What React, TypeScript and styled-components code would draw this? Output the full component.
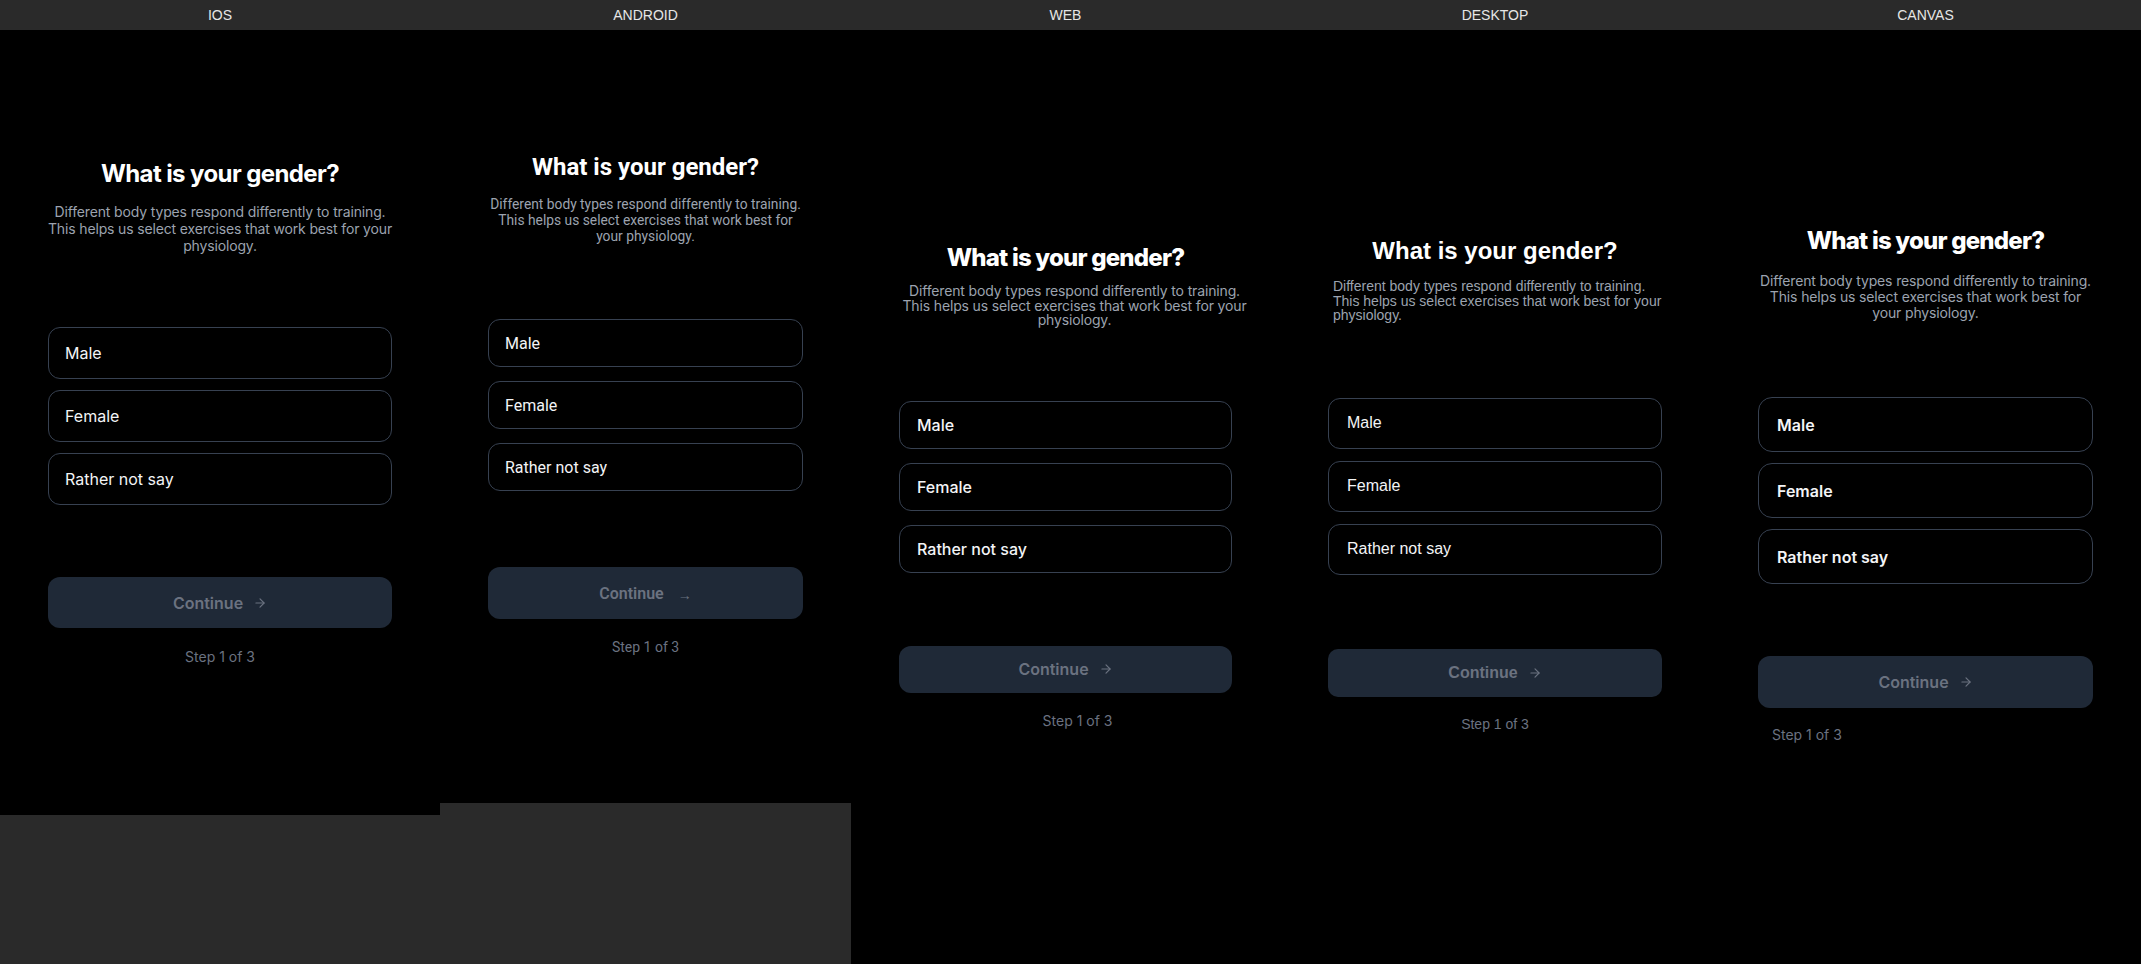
import React from 'react';
import styled, { createGlobalStyle } from 'styled-components';
import { ArrowRight } from 'lucide-react';

type Variant = {
  label: string;
  font: string;
  frameHeight?: number;
  padTop: number;
  titleWeight: number;
  titleTrack: number;
  subSize: number;
  subTrack: number;
  subGap: number;
  subLine: number;
  subAlign: 'center' | 'left';
  subMargin: string;
  subPad: string;
  optTop: number;
  optH: number;
  optGap: number;
  optWeight: number;
  optRadius: number;
  optPad: number;
  btnTop: number;
  btnH: number;
  btnRadius: number;
  stepTop: number;
  stepAlign: 'center' | 'left';
  stepPad: string;
  textArrow?: boolean;
};

const INTER = 'Inter, "Noto Sans", sans-serif';

const variants: Variant[] = [
  {
    label: 'IOS', font: INTER, frameHeight: 785, padTop: 132, titleWeight: 700, titleTrack: -0.6,
    subSize: 14, subTrack: -0.15, subGap: 17, subLine: 17, subAlign: 'center', subMargin: '0 -2px', subPad: '0',
    optTop: 73, optH: 52, optGap: 11, optWeight: 400, optRadius: 12, optPad: 16,
    btnTop: 72, btnH: 51, btnRadius: 12, stepTop: 19, stepAlign: 'center', stepPad: '0',
  },
  {
    label: 'ANDROID', font: 'Roboto, sans-serif', frameHeight: 773, padTop: 125, titleWeight: 700, titleTrack: 0,
    subSize: 13.8, subTrack: 0, subGap: 17, subLine: 16, subAlign: 'center', subMargin: '0 -1px', subPad: '0',
    optTop: 75, optH: 48, optGap: 14, optWeight: 400, optRadius: 12, optPad: 16,
    btnTop: 76, btnH: 52, btnRadius: 12, stepTop: 18, stepAlign: 'center', stepPad: '0',
    textArrow: true,
  },
  {
    label: 'WEB', font: INTER, padTop: 216, titleWeight: 800, titleTrack: -0.8,
    subSize: 14, subTrack: -0.15, subGap: 14, subLine: 14.5, subAlign: 'center', subMargin: '0 -22px 0 -4px', subPad: '0',
    optTop: 73, optH: 48, optGap: 14, optWeight: 500, optRadius: 12, optPad: 17,
    btnTop: 73, btnH: 47, btnRadius: 12, stepTop: 18, stepAlign: 'center', stepPad: '0 0 0 24px',
  },
  {
    label: 'DESKTOP', font: '"Liberation Sans", Arial, sans-serif', padTop: 209, titleWeight: 700, titleTrack: 0,
    subSize: 14, subTrack: 0, subGap: 16, subLine: 14.5, subAlign: 'left', subMargin: '0', subPad: '0 0 0 5px',
    optTop: 75, optH: 51, optGap: 12, optWeight: 400, optRadius: 12, optPad: 18,
    btnTop: 74, btnH: 48, btnRadius: 10, stepTop: 17, stepAlign: 'center', stepPad: '0',
  },
  {
    label: 'CANVAS', font: INTER, padTop: 199, titleWeight: 800, titleTrack: -0.8,
    subSize: 14, subTrack: -0.15, subGap: 20, subLine: 16, subAlign: 'center', subMargin: '0', subPad: '0',
    optTop: 76, optH: 55, optGap: 11, optWeight: 600, optRadius: 14, optPad: 18,
    btnTop: 72, btnH: 52, btnRadius: 12, stepTop: 17, stepAlign: 'left', stepPad: '0 0 0 14px',
  },
];

const options = ['Male', 'Female', 'Rather not say'];

const GlobalStyle = createGlobalStyle`
  html, body {
    margin: 0;
    padding: 0;
    background: #2a2a2a;
  }
  * { box-sizing: border-box; }
`;

const Page = styled.div`
  display: grid;
  grid-template-columns: 440px 411px 429px 430px 431px;
  grid-template-rows: 30px 934px;
  width: 2141px;
  height: 964px;
  overflow: hidden;
  background: #2a2a2a;
`;

const HeaderCell = styled.div`
  display: flex;
  align-items: center;
  justify-content: center;
  color: #e6e6e6;
  font-family: "Liberation Sans", Arial, sans-serif;
  font-size: 14px;
  background: #2a2a2a;
`;

const Frame = styled.div<{ $v: Variant }>`
  display: flex;
  flex-direction: column;
  align-self: start;
  height: ${({ $v }) => ($v.frameHeight ? `${$v.frameHeight}px` : '934px')};
  padding: ${({ $v }) => $v.padTop}px 48px 0;
  background: #000;
  font-family: ${({ $v }) => $v.font};
`;

const Title = styled.h1<{ $v: Variant }>`
  margin: 0;
  font-size: 24px;
  line-height: 24px;
  font-weight: ${({ $v }) => $v.titleWeight};
  letter-spacing: ${({ $v }) => $v.titleTrack}px;
  color: #fff;
  text-align: center;
`;

const Subtitle = styled.p<{ $v: Variant }>`
  margin: ${({ $v }) => $v.subMargin};
  margin-top: ${({ $v }) => $v.subGap}px;
  padding: ${({ $v }) => $v.subPad};
  font-size: ${({ $v }) => $v.subSize}px;
  letter-spacing: ${({ $v }) => $v.subTrack}px;
  line-height: ${({ $v }) => $v.subLine}px;
  color: #9ca3af;
  text-align: ${({ $v }) => $v.subAlign};
`;

const OptionList = styled.div<{ $v: Variant }>`
  display: flex;
  flex-direction: column;
  gap: ${({ $v }) => $v.optGap}px;
  margin-top: ${({ $v }) => $v.optTop}px;
`;

const Option = styled.div<{ $v: Variant }>`
  display: flex;
  align-items: center;
  height: ${({ $v }) => $v.optH}px;
  padding: 0 ${({ $v }) => $v.optPad}px;
  border: 1px solid #374151;
  border-radius: ${({ $v }) => $v.optRadius}px;
  color: #f3f4f6;
  font-size: 16px;
  font-weight: ${({ $v }) => $v.optWeight};
`;

const ContinueButton = styled.div<{ $v: Variant }>`
  display: flex;
  align-items: center;
  justify-content: center;
  gap: 10px;
  height: ${({ $v }) => $v.btnH}px;
  margin-top: ${({ $v }) => $v.btnTop}px;
  border-radius: ${({ $v }) => $v.btnRadius}px;
  background: #1f2937;
  color: #6b7280;
  font-size: 16px;
  font-weight: 600;
`;

const TextArrow = styled.span`
  font-size: 14px;
  font-weight: 400;
  padding-top: 4px;
  margin-left: 4px;
`;

const StepText = styled.div<{ $v: Variant }>`
  margin-top: ${({ $v }) => $v.stepTop}px;
  padding: ${({ $v }) => $v.stepPad};
  font-size: 14px;
  line-height: 20px;
  color: #6b7280;
  text-align: ${({ $v }) => $v.stepAlign};
`;

const GenderScreen: React.FC<{ v: Variant }> = ({ v }) => (
  <Frame $v={v}>
    <Title $v={v}>What is your gender?</Title>
    <Subtitle $v={v}>
      Different body types respond differently to training. This helps us select exercises that work best for your physiology.
    </Subtitle>
    <OptionList $v={v}>
      {options.map((o) => (
        <Option key={o} $v={v}>{o}</Option>
      ))}
    </OptionList>
    <ContinueButton $v={v}>
      Continue
      {v.textArrow ? <TextArrow>→</TextArrow> : <ArrowRight size={14} strokeWidth={2} />}
    </ContinueButton>
    <StepText $v={v}>Step 1 of 3</StepText>
  </Frame>
);

export default function App() {
  return (
    <>
      <GlobalStyle />
      <Page>
        {variants.map((v) => (
          <HeaderCell key={v.label}>{v.label}</HeaderCell>
        ))}
        {variants.map((v) => (
          <GenderScreen key={v.label} v={v} />
        ))}
      </Page>
    </>
  );
}
